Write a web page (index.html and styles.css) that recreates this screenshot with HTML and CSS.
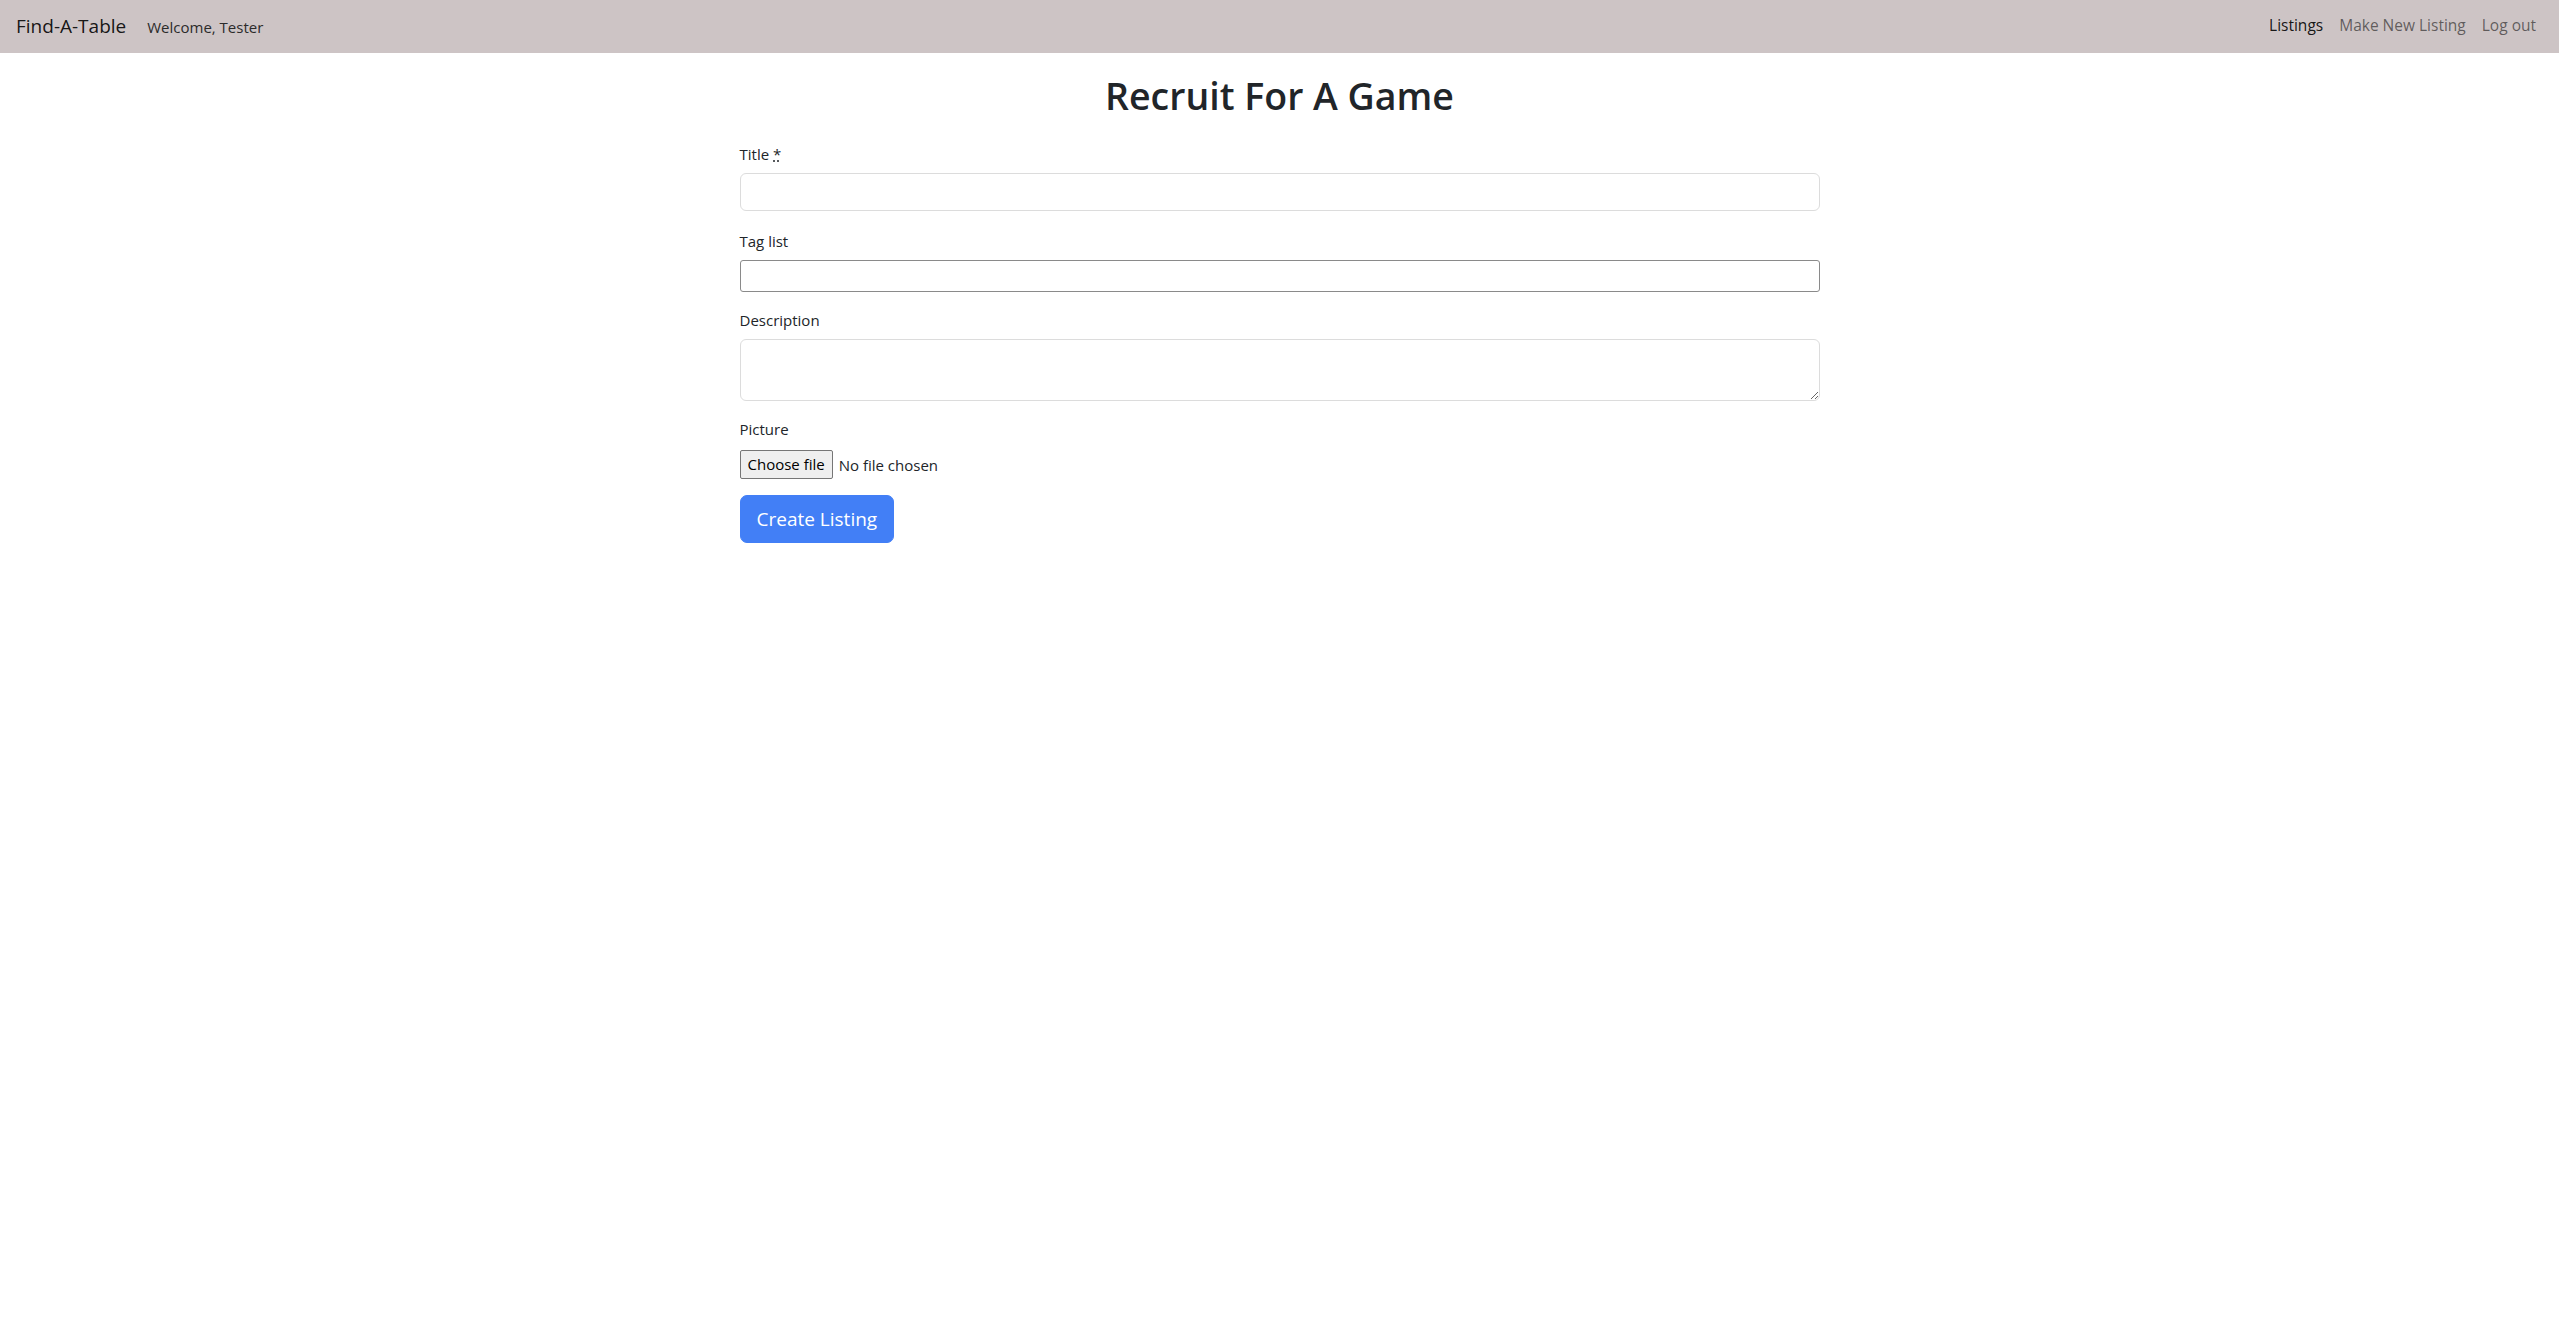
FILE: index.html
```html
<!DOCTYPE html>
<html lang="en">
<head>
<meta charset="utf-8">
<title>Find-A-Table</title>
<link rel="stylesheet" href="styles.css">
</head>
<body>
<nav class="navbar">
  <div class="nav-left">
    <a class="brand" href="#">Find-A-Table</a>
    <span class="welcome">Welcome, Tester</span>
  </div>
  <ul class="nav-links">
    <li><a class="nav-link active" href="#">Listings</a></li>
    <li><a class="nav-link" href="#">Make New Listing</a></li>
    <li><a class="nav-link" href="#">Log out</a></li>
  </ul>
</nav>
<main class="page">
  <h1 class="page-title">Recruit For A Game</h1>
  <form class="listing-form">
    <div class="field field-title">
      <label class="form-label" for="title">Title <abbr title="required">*</abbr></label>
      <input class="form-control" id="title" type="text">
    </div>
    <div class="field field-tags">
      <label class="plain-label" for="tags">Tag list</label>
      <input class="plain-input" id="tags" type="text">
    </div>
    <div class="field field-desc">
      <label class="form-label" for="desc">Description</label>
      <textarea class="form-control form-textarea" id="desc" rows="2"></textarea>
    </div>
    <div class="field field-picture">
      <label class="form-label">Picture</label>
      <div class="file-input">
        <span class="file-button">Choose file</span>
        <span class="file-name">No file chosen</span>
      </div>
    </div>
    <button class="btn-primary" type="button">Create Listing</button>
  </form>
</main>
</body>
</html>
```

FILE: styles.css
```css
* { box-sizing: border-box; }

html, body {
  margin: 0;
  padding: 0;
  background: #ffffff;
  color: #212529;
  font-family: "Open Sans", "Noto Sans", "Liberation Sans", sans-serif;
  font-size: 15px;
  line-height: 24px;
}

a { text-decoration: none; }

.navbar {
  height: 53px;
  background: #cdc4c5;
  display: flex;
  align-items: center;
  justify-content: space-between;
  padding: 0 15px 0 16px;
}

.nav-left {
  display: flex;
  align-items: baseline;
  gap: 21px;
}

.brand {
  font-size: 19px;
  color: rgba(0, 0, 0, 0.9);
}

.welcome {
  font-size: 15px;
  color: #2b2b2b;
}

.nav-links {
  list-style: none;
  margin: -3px 0 0;
  padding: 0;
  display: flex;
}

.nav-link {
  display: block;
  padding: 0 8px;
  font-size: 15.5px;
  color: rgba(0, 0, 0, 0.55);
}

.nav-link.active {
  color: rgba(0, 0, 0, 0.9);
}

.page {
  padding-top: 19px;
}

.page-title {
  margin: 0 0 22px;
  text-align: center;
  font-size: 37.5px;
  font-weight: 600;
  line-height: 48px;
  color: #212529;
}

.listing-form {
  width: 1080px;
  margin: 0 auto;
}

.field { margin-bottom: 16px; }
.field-title { margin-bottom: 18px; }

.form-label {
  display: block;
  margin-bottom: 7px;
}

.plain-label {
  display: block;
  margin-bottom: 7px;
}

abbr[title] {
  text-decoration: underline dotted;
  cursor: help;
}

.form-control {
  display: block;
  width: 100%;
  height: 38px;
  padding: 6px 12px;
  font: inherit;
  color: #212529;
  background: #fff;
  border: 1px solid #dcdcdc;
  border-radius: 6px;
}

.form-textarea {
  height: 62px;
  resize: vertical;
}

.plain-input {
  display: block;
  width: 100%;
  height: 32px;
  padding: 1px 2px;
  font: inherit;
  background: #fff;
  border: 1px solid #8a8a8a;
  border-radius: 3px;
}

.file-input {
  display: flex;
  align-items: center;
  gap: 6px;
  margin-top: 9px;
}

.file-button {
  display: inline-block;
  height: 29px;
  line-height: 27px;
  padding: 0 7px;
  background: #efefef;
  border: 1px solid #767676;
  border-radius: 2px;
  color: #000;
}

.file-name { color: #212529; }

.btn-primary {
  display: inline-block;
  height: 48px;
  padding: 0 16px;
  font: inherit;
  font-size: 19px;
  color: #fff;
  background: #427ff6;
  border: 1px solid #427ff6;
  border-radius: 7px;
}
```
